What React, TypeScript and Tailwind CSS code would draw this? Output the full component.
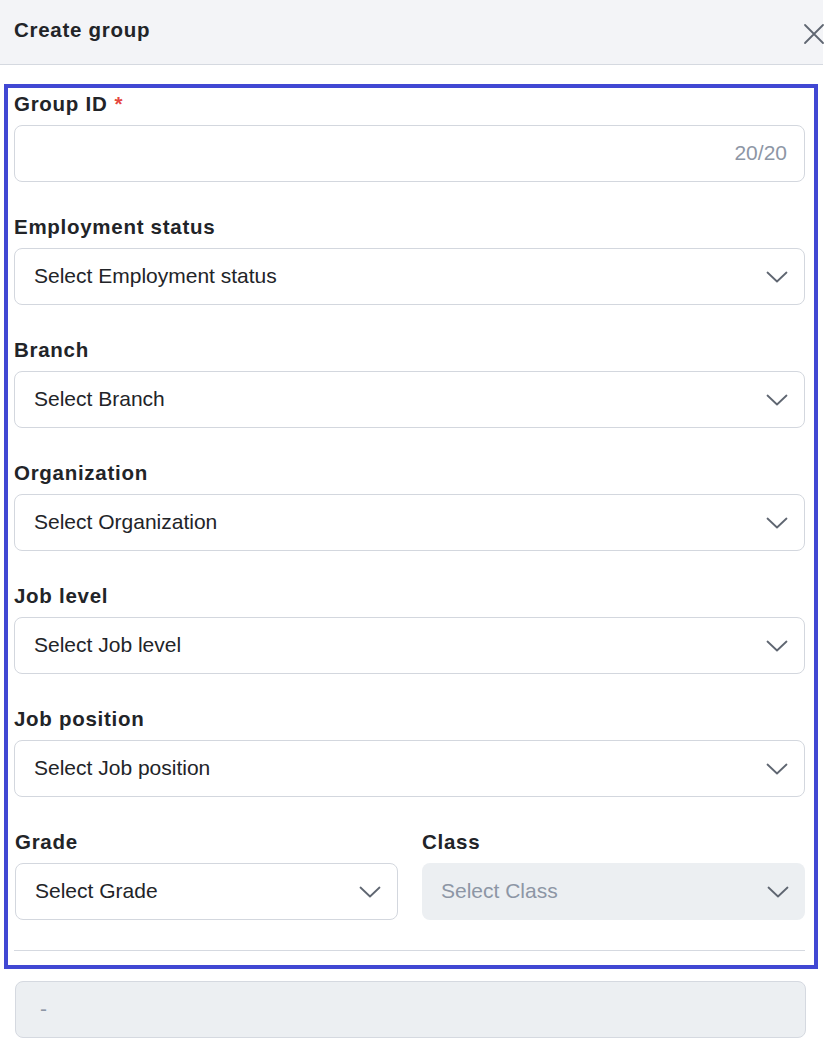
import React from 'react';

const Chevron = () => (
    <svg width="22" height="12" viewBox="0 0 22 12" fill="none" className="shrink-0">
        <path d="M1.5 1.5 L11 10.5 L20.5 1.5" stroke="#5f6671" strokeWidth="1.8" strokeLinecap="round" strokeLinejoin="round" />
    </svg>
);

function Label({ children, required }: { children: React.ReactNode; required?: boolean }) {
    return (
        <div className="h-[22px] leading-[22px] text-[20.5px] tracking-[0.035em] font-bold text-[#222428] mb-[10px]">
            {children}
            {required && <span className="text-[#e5483f] ml-[7px]">*</span>}
        </div>
    );
}

function Select({ placeholder, disabled }: { placeholder: string; disabled?: boolean }) {
    return (
        <div
            className={
                disabled
                    ? 'h-[57px] rounded-[8px] bg-[#eceff2] flex items-center justify-between pl-[19px] pr-[16px]'
                    : 'h-[57px] rounded-[8px] border border-[#d3d7de] bg-white flex items-center justify-between pl-[19px] pr-[16px]'
            }
        >
            <span className={disabled ? 'text-[21px] -mt-[2px] text-[#8d96a5]' : 'text-[21px] -mt-[2px] text-[#222428]'}>{placeholder}</span>
            <Chevron />
        </div>
    );
}

const fields = ['Employment status', 'Branch', 'Organization', 'Job level', 'Job position'];

export default function App() {
    return (
        <div className="w-[831px] min-h-[1058px] bg-white font-['Liberation_Sans',Arial,sans-serif]">
            <div className="w-[823px] h-[65px] bg-[#f3f4f7] border-b border-[#d5d9e0] flex items-center justify-between pl-[14px]">
                <h2 className="text-[20.5px] tracking-[0.035em] font-bold text-[#222428] -mt-[4px]">Create group</h2>
                <svg width="22" height="22" viewBox="0 0 22 22" className="mr-[-2px] mt-[4px]">
                    <path d="M2 2 L20 20 M20 2 L2 20" stroke="#5f6671" strokeWidth="1.8" strokeLinecap="round" />
                </svg>
            </div>

            <div className="pt-[19px] pl-[4px]">
                <div className="w-[814px] border-4 border-[#4148d3] pt-[5px] pl-[6px] pr-[9px]">
                    <Label required>Group ID</Label>
                    <div className="h-[57px] rounded-[8px] border border-[#d3d7de] flex items-center justify-end pr-[17px]">
                        <span className="text-[21px] -mt-[2px] text-[#8d96a5]">20/20</span>
                    </div>

                    {fields.map(f => (
                        <div key={f} className="mt-[34px]">
                            <Label>{f}</Label>
                            <Select placeholder={`Select ${f}`} />
                        </div>
                    ))}

                    <div className="mt-[34px] grid grid-cols-2 gap-[24px] pl-px">
                        <div>
                            <Label>Grade</Label>
                            <Select placeholder="Select Grade" />
                        </div>
                        <div>
                            <Label>Class</Label>
                            <Select placeholder="Select Class" disabled />
                        </div>
                    </div>

                    <div className="mt-[30px] h-px bg-[#d5d9e0]" />
                    <div className="h-[14px]" />
                </div>
            </div>

            <div className="mt-[12px] ml-[15px] w-[791px] h-[57px] rounded-[8px] border border-[#d5d9e0] bg-[#eceff2] flex items-center pl-[24px]">
                <span className="text-[21px] -mt-[2px] text-[#8d96a5]">-</span>
            </div>
        </div>
    );
}
